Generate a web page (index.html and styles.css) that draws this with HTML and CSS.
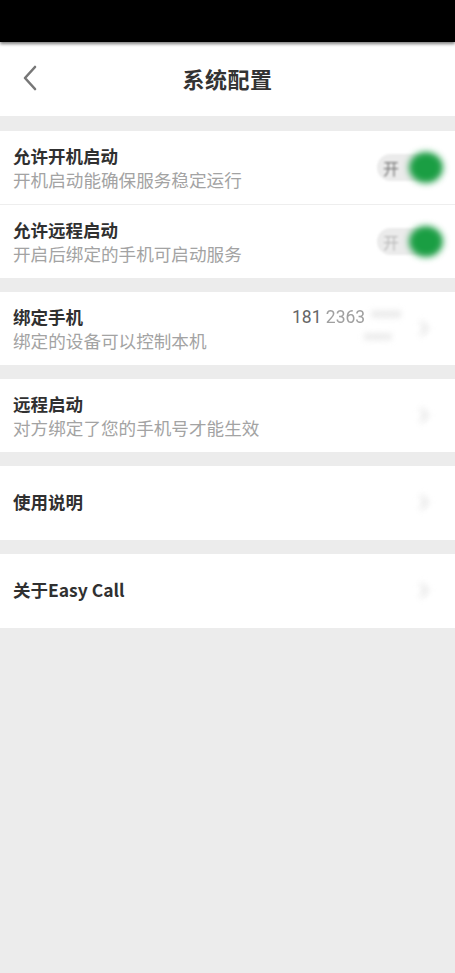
FILE: index.html
```html
<!DOCTYPE html>
<html lang="zh">
<head>
<meta charset="utf-8">
<link rel="stylesheet" href="styles.css">
</head>
<body>
<div class="statusbar"></div>
<header class="topbar">
  <svg class="back" width="18" height="28" viewBox="0 0 18 28"><path d="M14 3 L4 14 L14 25" fill="none" stroke="#777" stroke-width="2.6" stroke-linecap="round" stroke-linejoin="round"/></svg>
  <h1 class="title">系统配置</h1>
</header>

<section class="group">
  <div class="row divided">
    <div class="texts">
      <div class="label">允许开机启动</div>
      <div class="sub">开机启动能确保服务稳定运行</div>
    </div>
    <div class="toggle"><span class="tog-text">开</span><span class="knob"></span></div>
  </div>
  <div class="row">
    <div class="texts">
      <div class="label">允许远程启动</div>
      <div class="sub">开启后绑定的手机可启动服务</div>
    </div>
    <div class="toggle faded"><span class="tog-text">开</span><span class="knob"></span></div>
  </div>
</section>

<section class="group">
  <div class="row">
    <div class="texts">
      <div class="label">绑定手机</div>
      <div class="sub">绑定的设备可以控制本机</div>
    </div>
    <div class="phone">
      <div class="num"><span class="n1">181 </span><span class="n2">2363</span><span class="n3">****</span></div>
      <div class="num2">****</div>
    </div>
    <span class="chev"></span>
  </div>
</section>

<section class="group">
  <div class="row">
    <div class="texts">
      <div class="label">远程启动</div>
      <div class="sub">对方绑定了您的手机号才能生效</div>
    </div>
    <span class="chev"></span>
  </div>
</section>

<section class="group">
  <div class="row single">
    <div class="label">使用说明</div>
    <span class="chev"></span>
  </div>
</section>

<section class="group">
  <div class="row single">
    <div class="label">关于Easy Call</div>
    <span class="chev"></span>
  </div>
</section>
</body>
</html>
```
FILE: styles.css
```css
* { box-sizing: border-box; }
html, body { margin: 0; padding: 0; }
body {
  background: #ececec;
  font-family: "Noto Sans CJK SC", "Noto Sans", sans-serif;
  width: 455px;
  min-height: 973px;
  overflow: hidden;
}
.statusbar {
  height: 42px;
  background: #000;
  box-shadow: 0 2px 3px rgba(0,0,0,0.5);
  position: relative;
  z-index: 1;
}
.topbar {
  height: 74px;
  background: #fff;
  display: flex;
  align-items: center;
  justify-content: center;
  position: relative;
  margin-bottom: 15px;
}
.back {
  position: absolute;
  left: 21px;
  top: 22px;
}
.title {
  margin: 0 0 2px 0;
  font-size: 22px;
  font-weight: 700;
  color: #333;
  letter-spacing: 0.5px;
}
.group {
  background: #fff;
  margin-bottom: 14px;
}
.row {
  display: flex;
  align-items: center;
  padding: 13px 0 13px 13px;
  min-height: 73px;
  position: relative;
}
.row.divided { border-bottom: 1px solid #eeeeee; }
.row.single { min-height: 74px; padding-top: 0; padding-bottom: 2px; }
.texts { flex: 1; }
.label {
  font-size: 17.5px;
  font-weight: 700;
  color: #303030;
  line-height: 24px;
  flex: 1;
}
.sub {
  font-size: 17.6px;
  color: #a3a3a3;
  line-height: 23px;
}
.toggle {
  width: 64px;
  height: 27px;
  border-radius: 14px;
  background: #ebebeb;
  margin-right: 14px;
  display: flex;
  align-items: center;
  position: relative;
  filter: blur(0.8px);
}
.tog-text {
  font-size: 16px;
  color: #777;
  margin-left: 6px;
}
.toggle.faded .tog-text { color: #bbb; }
.knob {
  position: absolute;
  right: -2px;
  top: -2px;
  width: 34px;
  height: 31px;
  border-radius: 50%;
  background: #1a9e43;
  filter: blur(3px);
}
.phone {
  position: absolute;
  left: 292px;
  top: 13px;
  font-family: Roboto, "Noto Sans", sans-serif;
}
.num { font-size: 17.5px; line-height: 24px; color: #666; white-space: nowrap; }
.n2 { color: #a0a0a0; filter: blur(0.4px); display: inline-block; }
.n3 { color: #ccc; filter: blur(3px); display: inline-block; margin-left: 6px; }
.num2 {
  font-size: 16px;
  color: #ccc;
  margin-left: 72px;
  filter: blur(3px);
  margin-top: 1px;
}
.chev {
  width: 11px;
  height: 11px;
  border-right: 3px solid #e0e0e0;
  border-top: 3px solid #e0e0e0;
  transform: rotate(45deg);
  margin-right: 28px;
  filter: blur(3px);
}
```
